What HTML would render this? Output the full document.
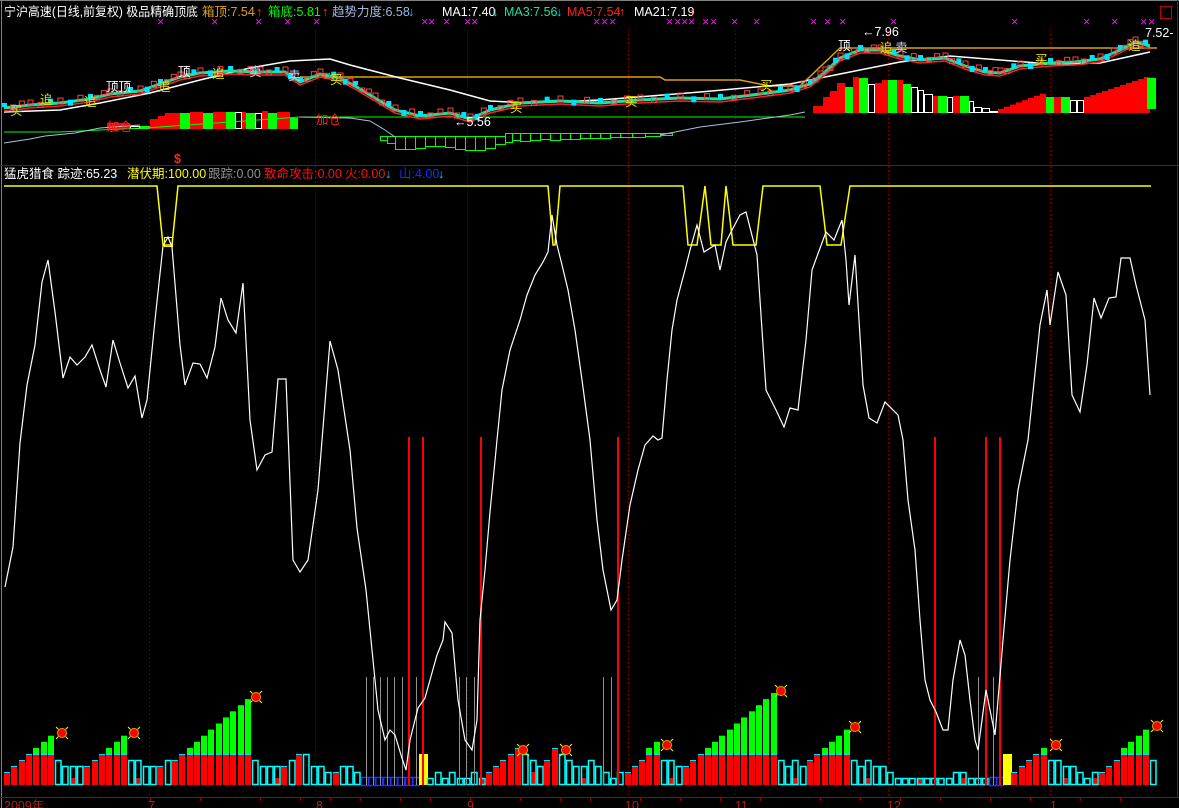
<!DOCTYPE html>
<html><head><meta charset="utf-8">
<style>
html,body{margin:0;padding:0;background:#000;width:1179px;height:808px;overflow:hidden}
svg{display:block}
text{font-family:"Liberation Sans","Noto Sans CJK SC","WenQuanYi Zen Hei",sans-serif;font-size:12.5px}
</style></head><body>
<svg id="s" width="1179" height="808" viewBox="0 0 1179 808" xmlns="http://www.w3.org/2000/svg">
<rect width="1179" height="808" fill="#000"/>
<line x1="0" y1="0.5" x2="1179" y2="0.5" stroke="#808080"/>
<line x1="1.5" y1="0" x2="1.5" y2="808" stroke="#808080"/>
<line x1="0" y1="165.5" x2="1179" y2="165.5" stroke="#a00000"/>
<line x1="0" y1="797.5" x2="1179" y2="797.5" stroke="#a00000"/>
<line x1="1177.5" y1="0" x2="1177.5" y2="797" stroke="#a00000"/>
<rect x="1160.5" y="6.5" width="11" height="12" fill="none" stroke="#c00000"/>
<g id="grid"></g>
<g id="g"></g>
<!-- header -->
<text x="4" y="16" fill="#fff" textLength="194" lengthAdjust="spacingAndGlyphs">宁沪高速(日线,前复权) 极品精确顶底</text>
<text x="202" y="16" fill="#e0a020">箱顶:7.54</text><text x="256" y="16" fill="#ff4040">↑</text>
<text x="268" y="16" fill="#00ff00">箱底:5.81</text><text x="322" y="16" fill="#ff4040">↑</text>
<text x="332" y="16" fill="#a0b8e0">趋势力度:6.58</text><text x="408" y="16" fill="#00e0ff">↓</text>
<text x="442" y="16" fill="#fff">MA1:7.40</text><text x="492" y="16" fill="#00e0ff">↓</text>
<text x="504" y="16" fill="#20e0a0">MA3:7.56</text><text x="556" y="16" fill="#00e0ff">↓</text>
<text x="567" y="16" fill="#ff2020">MA5:7.54</text><text x="619" y="16" fill="#ff4040">↑</text>
<text x="634" y="16" fill="#fff">MA21:7.19</text><text x="689" y="16" fill="#ff4040">↑</text>
<text x="174" y="163" fill="#ff2020" font-weight="bold">$</text>
<text x="4" y="178" fill="#fff">猛虎猎食 踪迹:65.23</text><text x="112" y="178" fill="#00e0ff">↓</text>
<text x="127" y="178" fill="#ffff00">潜伏期:100.00</text>
<text x="208" y="178" fill="#909090">跟踪:0.00</text>
<text x="264" y="178" fill="#ff1010">致命攻击:0.00</text>
<text x="345" y="178" fill="#ff1010">火:0.00</text><text x="385" y="178" fill="#00e0ff">↓</text>
<text x="399" y="178" fill="#1030ff">山:4.00</text><text x="438" y="178" fill="#00e0ff">↓</text>
<!-- top labels -->
<text x="106" y="91" fill="#fff" font-size="15">顶顶</text>
<text x="178" y="76" fill="#fff" font-size="15">顶</text>
<text x="249" y="76" fill="#c0d0f0" font-size="15">卖</text>
<text x="288" y="80" fill="#c0d0f0" font-size="15">卖</text>
<text x="40" y="104" fill="#e0e000" font-size="13">追</text>
<text x="84" y="106" fill="#e0e000" font-size="13">追</text>
<text x="158" y="91" fill="#e0e000" font-size="13">追</text>
<text x="212" y="78" fill="#e0e000" font-size="13">追</text>
<text x="10" y="115" fill="#e0e000" font-size="13">买</text>
<text x="330" y="84" fill="#e0e000" font-size="13">买</text>
<text x="510" y="112" fill="#e0e000" font-size="13">买</text>
<text x="625" y="106" fill="#e0e000" font-size="13">买</text>
<text x="760" y="90" fill="#e0e000" font-size="13">买</text>
<text x="1035" y="64" fill="#e0e000" font-size="13">买</text>
<text x="1128" y="50" fill="#e0e000" font-size="13">追</text>
<text x="107" y="131" fill="#ff2020" font-size="15">加仓</text>
<text x="316" y="124" fill="#ff2020" font-size="15">加仓</text>
<text x="838" y="50" fill="#fff" font-size="15">顶</text>
<text x="880" y="52" fill="#e0e000" font-size="14">追</text>
<text x="895" y="52" fill="#c0d0f0" font-size="14">卖</text>
<text x="454" y="126" fill="#fff" font-size="13">←5.56</text>
<text x="862" y="36" fill="#fff" font-size="13">←7.96</text>
<text x="1145" y="37" fill="#fff" font-size="13">7.52-</text>
<!-- axis -->
<text x="4" y="810" fill="#b02020" font-size="13">2009年</text>
<text x="148" y="810" fill="#b02020" font-size="13">7</text>
<text x="316" y="810" fill="#b02020" font-size="13">8</text>
<text x="467" y="810" fill="#b02020" font-size="13">9</text>
<text x="625" y="810" fill="#b02020" font-size="13">10</text>
<text x="735" y="810" fill="#b02020" font-size="13">11</text>
<text x="887" y="810" fill="#b02020" font-size="13">12</text>
<text x="1050" y="810" fill="#b02020" font-size="13">1</text>
</svg>
<script>
var NS="http://www.w3.org/2000/svg",G=document.getElementById('g'),GR=document.getElementById('grid');
function el(t,a,p){var e=document.createElementNS(NS,t);for(var k in a)e.setAttribute(k,a[k]);(p||G).appendChild(e);return e;}
function pl(pts,c,w){el('polyline',{points:pts.map(function(p){return p.join(',')}).join(' '),fill:'none',stroke:c,'stroke-width':w||1});}
[149,315,467,628,735,888,1050].forEach(function(x){el('line',{x1:x+.5,y1:30,x2:x+.5,y2:797,stroke:'#900000','stroke-dasharray':'1,3'},GR);});
[150,200,260,300,330,360,400,430,470,520,560,590,640,680,720,760,820,860,900,940,990,1030,1080,1120].forEach(function(x){el('line',{x1:x+.5,y1:797,x2:x+.5,y2:801,stroke:'#a00000'},GR);});
[160,214,258,287,316,424,431,446,467,474,596,604,612,669,677,684,691,705,713,734,756,813,827,842,893,1014,1086,1114,1143,1151].forEach(function(x){var t=el('text',{x:x-3,y:26,fill:'#e020e0','font-size':'10'});t.textContent='×';});
[[107,130,123,'r'],[130,140,126,'w'],[140,150,126,'g'],[150,158,119,'r'],[158,165,116,'r'],[165,180,113,'r'],[180,190,113,'g'],[190,203,112,'r'],[203,213,113,'g'],[213,226,112,'r'],[226,235,112,'g'],[235,242,112,'w'],[242,246,112,'r'],[246,255,113,'g'],[255,262,113,'w'],[262,268,111,'r'],[268,277,113,'g'],[277,290,112,'r'],[290,298,118,'g']].forEach(function(b){blk(b,129);});
function blk(b,bot){var c=b[3];el('rect',{x:b[0]+(c=='w'?.5:0),y:b[2]+(c=='w'?.5:0),width:b[1]-b[0]-(c=='w'?1:0),height:bot-b[2]-(c=='w'?1:0),fill:c=='r'?'#ff0000':c=='g'?'#00ff00':'none',stroke:c=='w'?'#fff':'none'});}
var rb=[[813,823,106,'r'],[823,830,97,'r'],[830,837,91,'r'],[837,845,83,'r'],[845,853,87,'g'],[853,859,77,'r'],[859,868,78,'g'],[868,875,84,'w'],[875,882,83,'r'],[882,888,80,'r'],[888,897,80,'g'],[897,903,80,'r'],[903,911,84,'g'],[911,918,87,'w'],[918,924,90,'w'],[924,933,94,'w'],[933,938,96,'r'],[938,947,96,'g'],[947,953,97,'w'],[953,960,96,'r'],[960,969,96,'g'],[969,974,101,'w'],[974,982,107,'w'],[982,990,108,'w'],[990,998,111,'w']];
for(var x=998,t=109;x<1046;x+=6,t-=2.2)rb.push([x,x+6,t,'r']);
rb.push([1046,1054,97,'g'],[1054,1061,97,'r'],[1061,1070,97,'g'],[1070,1077,100,'w'],[1077,1084,100,'w']);
for(var x=1084,t=97;x<1147;x+=6,t-=2)rb.push([x,x+6,t,'r']);
rb.forEach(function(b){blk(b,113);});
el('rect',{x:1147,y:78,width:9,height:31,fill:'#00ff00'});
var hb=[[380,387,140],[387,395,143],[395,405,149],[405,415,149],[415,425,148],[425,435,146],[435,445,146],[445,455,147],[455,465,149],[465,475,150],[475,485,150],[485,495,148],[495,505,144],[505,512,142],[512,520,140],[520,530,141],[530,540,140],[540,550,139],[550,560,140],[560,570,139],[570,580,139],[580,590,138],[590,600,138],[600,610,138],[610,620,137],[620,632,137],[632,645,137],[645,660,136],[660,672,135]];
hb.forEach(function(b){var top=b[0]<505?136:133;el('rect',{x:b[0]+.5,y:top+.5,width:b[1]-b[0],height:b[2]-top,fill:'none',stroke:'#00ff00'});});
pl([[4,132],[60,132],[100,130],[145,128],[300,117],[805,117]],'#00ff00');
pl([[4,143],[30,139],[45,136],[75,133],[100,128],[140,125]],'#a8c0e0');
pl([[300,117],[350,118],[370,121],[385,130],[395,137]],'#a8c0e0');
pl([[660,135],[700,127],[740,122],[790,115],[805,112]],'#a8c0e0');
pl([[300,77],[660,77],[665,80],[740,80],[770,86],[800,86],[840,48],[1157,48]],'#e0a000',1.5);
pl([[4,112],[60,110],[100,103],[150,93],[200,80],[250,68],[290,61],[330,59],[350,65],[400,78],[450,90],[490,101],[530,103],[600,100],[700,92],[790,84],[850,72],[900,62],[950,56],[1000,60],[1050,64],[1100,63],[1150,52]],'#fff',1.5);
var pr=[[4,108],[30,105],[60,103],[90,99],[110,94],[140,91],[160,84],[180,77],[200,73],[230,71],[260,72],[285,72],[300,82],[320,74],[340,78],[355,86],[375,98],[395,110],[420,116],[450,113],[470,119],[490,110],[520,103],[560,101],[600,103],[640,100],[680,98],[720,99],[760,94],[790,90],[810,84],[825,72],[840,58],[860,50],[880,50],[900,56],[920,60],[945,58],[965,66],[985,72],[1000,73],[1020,66],[1050,63],[1075,62],[1100,59],[1120,50],[1135,42],[1150,46]];
pl(pr.map(function(p){return [p[0],p[1]+3]}),'#ff2020',1.5);
pl(pr,'#20e0a0',3);
for(var i=0;i<pr.length-1;i++){var a=pr[i],b=pr[i+1];for(var k=0;k<3;k++){var x=a[0]+(b[0]-a[0])*k/3,y=a[1]+(b[1]-a[1])*k/3;var up=(i+k)%3==0;el('rect',{x:x-2,y:y-5+(k%2)*3,width:5,height:4+(i%3),fill:up?'#00e0ff':'none',stroke:up?'none':'#ff4040'});}}
var seq="r2 r3 r4 r5 r5g1 r5g2 r5g3 c4 c3 c3r1 c3 r3 r4 r5 r5g1 r5g2 r5g3 c4 c4r1 c3 c3 r3 c4 r4 r5 r5g1 r5g2 r5g3 r5g4 r5g5 r5g6 r5g7 r5g8 r5g9 c4 c3 c3 c3r1 r3 c4 r5 c5 c3 c3 c2 r2 c3 c3 c2 b b b b b b b b y c1 c2 c1 c2 c1 c1 c2 c1r1 r2 r3 r4 r5 r6 c5 c4r2 c3 r4 r6 c5 c4 c3 c3r1 c4 c3 c2 c1 c2 r2 r3 r4 r5g1 r5g2 c4 c4r1 c3 r3 r4 r5 r5g1 r5g2 r5g3 r5g4 r5g5 r5g6 r5g7 r5g8 r5g9 r5g10 c4 c3 c4r1 c3 r4 r5 r5g1 r5g2 r5g3 r5g4 c4 c3 c4r1 c3 c3 c2 c1 c1 c1 c1r1 c1 c1 c1 c1 c2 c2r1 c1 c1 c1 b b y r2 r3 r4 r5 r5g1 c4 c4 c3r1 c3 c2 c1 c2r1 r2 r3 r4 r5g1 r5g2 r5g3 r5g4 c4".split(' ');
var B=785;function H(l){return l*6+1;}
seq.forEach(function(s,i){var x=Math.round(4+i*7.3);var m;
 if(s=='b'){el('rect',{x:x-.5,y:B-8+.5,width:7.3,height:8,fill:'none',stroke:'#2030ff','stroke-width':1.5});return;}
 if(s=='y'){el('rect',{x:x-1,y:754,width:9,height:31,fill:'#ffff00'});return;}
 if(m=s.match(/^r(\d+)(?:g(\d+))?/)){var h=H(+m[1]);el('rect',{x:x,y:B-h,width:6,height:h,fill:'#ff0000'});if(m[2]){var g=+m[2]*6.1;el('rect',{x:x,y:B-h-g,width:6,height:g,fill:'#00ff00'});}el('line',{x1:x,y1:B-h+.5,x2:x+6,y2:B-h+.5,stroke:'#00e0ff'});return;}
 if(m=s.match(/^c(\d+)(?:r(\d+))?/)){var h=H(+m[1]);if(m[2]){var r=H(+m[2]);el('rect',{x:x+1,y:B-r,width:4,height:r,fill:'#ff0000'});}el('rect',{x:x+.5,y:B-h+.5,width:5.5,height:h-1,fill:'none',stroke:'#00ffff','stroke-width':1.5});}
});
[366,373,380,387,394,402,416,459,466,474,603,611,978,993].forEach(function(x){el('line',{x1:x+.5,y1:677,x2:x+.5,y2:785,stroke:'#909090'});});
[409,423,481,618,935,986,1000].forEach(function(x){el('rect',{x:x-1,y:437,width:2,height:348,fill:'#ff0000'});});
[[62,733],[134,733],[256,697],[523,750],[566,750],[667,745],[781,691],[855,727],[1056,745],[1157,726]].forEach(function(p){
 [[-6,-6],[6,-6],[-6,6],[6,6]].forEach(function(d){el('line',{x1:p[0]+d[0]*.6,y1:p[1]+d[1]*.6,x2:p[0]+d[0],y2:p[1]+d[1],stroke:'#ffff00'});});
 el('circle',{cx:p[0],cy:p[1],r:4.5,fill:'#ff0000',stroke:'#e0a000'});});
pl([[4,186],[157,186],[163,245],[172,245],[178,186],[548,186],[553,245],[555,245],[560,186],[683,186],[688,245],[697,245],[705,186],[711,245],[721,245],[726,186],[733,245],[756,245],[763,186],[820,186],[827,245],[841,245],[850,186],[1151,186]],'#ffff00',1.5);
el('rect',{x:164.5,y:237.5,width:8,height:9,fill:'none',stroke:'#ffff00'});
pl([[5,587],[13,547],[20,443],[27,385],[35,345],[42,282],[48,260],[55,312],[63,378],[70,357],[77,365],[85,357],[92,345],[100,370],[106,387],[113,340],[120,363],[128,388],[135,376],[142,418],[147,400],[155,320],[163,246],[168,237],[172,247],[180,345],[185,385],[193,363],[200,364],[207,378],[215,347],[221,298],[228,320],[236,333],[243,283],[250,420],[257,470],[265,455],[272,452],[278,379],[286,379],[293,560],[300,572],[308,560],[318,490],[330,341],[338,370],[350,450],[357,528],[366,590],[372,650],[378,710],[385,740],[390,730],[395,735],[401,755],[406,770],[410,740],[418,708],[425,698],[430,680],[437,655],[443,640],[445,622],[452,633],[458,700],[465,740],[472,750],[477,720],[480,620],[485,570],[490,512],[497,440],[502,390],[510,350],[520,320],[527,295],[535,275],[543,262],[548,252],[552,215],[557,245],[562,265],[568,290],[575,330],[582,380],[590,440],[597,520],[603,570],[611,610],[617,600],[622,560],[630,505],[638,470],[645,445],[653,436],[658,440],[662,438],[667,380],[672,330],[677,300],[685,270],[690,250],[697,225],[704,252],[715,245],[720,270],[726,242],[732,230],[740,215],[746,212],[757,255],[766,390],[776,410],[784,427],[790,408],[798,410],[806,340],[812,270],[826,232],[834,240],[842,220],[846,260],[849,305],[855,255],[863,385],[869,418],[877,423],[885,402],[898,415],[903,440],[908,500],[915,550],[920,620],[925,680],[930,700],[936,712],[943,730],[948,730],[953,680],[960,640],[965,655],[970,700],[975,740],[978,750],[982,720],[986,690],[990,710],[995,735],[998,700],[1003,640],[1010,560],[1018,490],[1028,440],[1040,325],[1047,290],[1050,325],[1058,272],[1066,295],[1072,395],[1080,412],[1087,365],[1094,298],[1101,318],[1109,298],[1116,297],[1121,258],[1130,258],[1136,285],[1145,320],[1150,395]],'#fff',1.2);
</script>
</body></html>
